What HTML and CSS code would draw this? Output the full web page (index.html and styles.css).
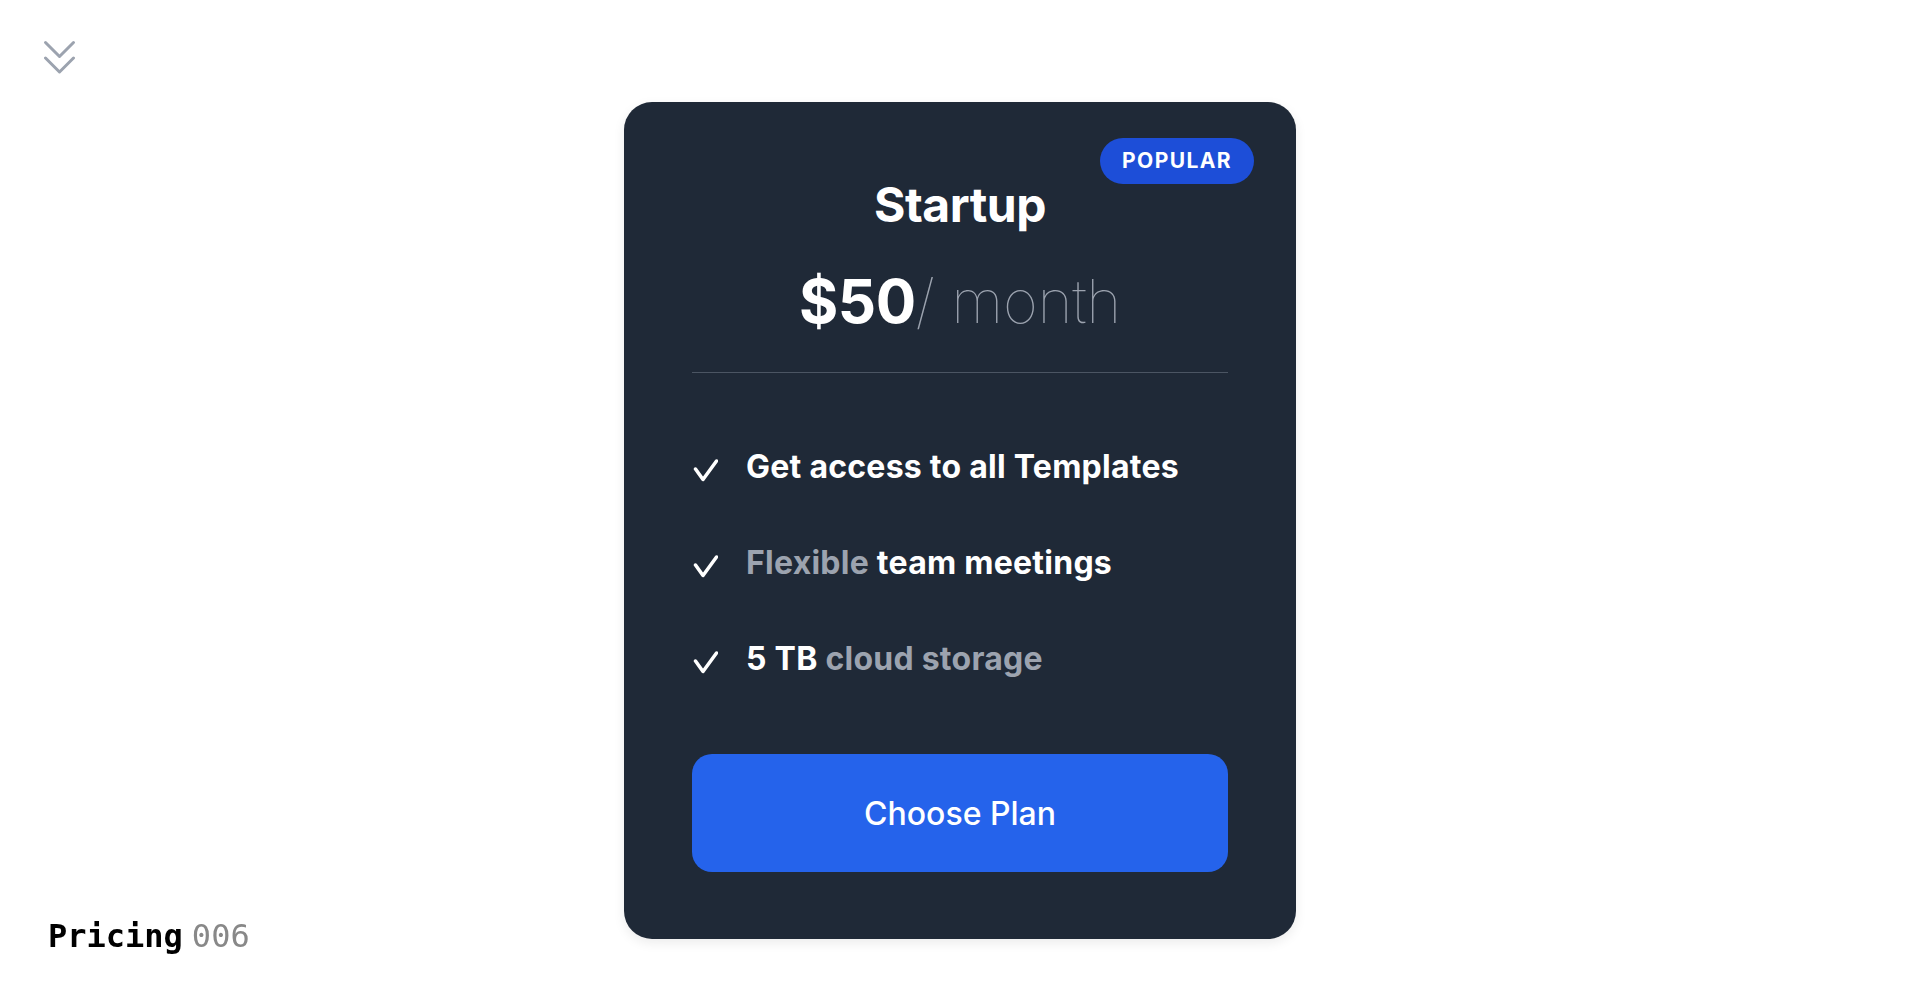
FILE: index.html
```html
<!DOCTYPE html>
<html lang="en">
<head>
<meta charset="utf-8">
<title>Pricing 006</title>
<link rel="stylesheet" href="styles.css">
</head>
<body>
<div class="page">
  <div class="topbar">
    <svg class="toggle-icon" width="33" height="34" viewBox="0 0 33 34" fill="none" stroke="#9ca3af" stroke-width="3" stroke-linecap="round" stroke-linejoin="round" aria-hidden="true">
      <polyline points="2.5,2.5 16.5,16.5 30.5,2.5"/>
      <polyline points="2.5,18 16.5,32 30.5,18"/>
    </svg>
  </div>
  <main class="stage">
    <section class="card">
      <span class="badge">POPULAR</span>
      <h2 class="plan-name">Startup</h2>
      <p class="price"><span class="amount">$50</span><span class="period">/ month</span></p>
      <hr class="divider">
      <ul class="features">
        <li class="feature">
          <svg class="check" width="26" height="26" viewBox="0 0 26 26" fill="none" stroke="#ffffff" stroke-width="3.5" stroke-linecap="round" stroke-linejoin="round" aria-hidden="true"><polyline points="3.5,12 11,22.5 24.5,4"/></svg>
          <span class="feature-text">Get access to all Templates</span>
        </li>
        <li class="feature">
          <svg class="check" width="26" height="26" viewBox="0 0 26 26" fill="none" stroke="#ffffff" stroke-width="3.5" stroke-linecap="round" stroke-linejoin="round" aria-hidden="true"><polyline points="3.5,12 11,22.5 24.5,4"/></svg>
          <span class="feature-text"><span class="muted">Flexible</span> team meetings</span>
        </li>
        <li class="feature">
          <svg class="check" width="26" height="26" viewBox="0 0 26 26" fill="none" stroke="#ffffff" stroke-width="3.5" stroke-linecap="round" stroke-linejoin="round" aria-hidden="true"><polyline points="3.5,12 11,22.5 24.5,4"/></svg>
          <span class="feature-text">5 TB <span class="muted">cloud storage</span></span>
        </li>
      </ul>
      <button class="choose-btn" type="button">Choose Plan</button>
    </section>
  </main>
  <div class="page-label"><span class="label-name">Pricing</span><span class="label-num">006</span></div>
</div>
</body>
</html>
```

FILE: styles.css
```css
* {
  box-sizing: border-box;
}

html, body {
  margin: 0;
  padding: 0;
  background: #ffffff;
}

body {
  font-family: "Inter", "Liberation Sans", sans-serif;
  color: #111827;
}

.page {
  min-height: 1000px;
  display: flex;
  flex-direction: column;
}

.topbar {
  padding: 40px 0 0 43px;
  height: 74px;
  display: flex;
  align-items: flex-start;
}

.toggle-icon {
  display: block;
}

.stage {
  display: flex;
  justify-content: center;
  padding-top: 28px;
}

.card {
  position: relative;
  width: 672px;
  height: 837px;
  background: #1f2937;
  border-radius: 28px;
  padding: 67px 68px 67px;
  display: flex;
  flex-direction: column;
  box-shadow: 0 4px 12px rgba(0, 0, 0, 0.08);
}

.badge {
  position: absolute;
  top: 36px;
  right: 42px;
  height: 46px;
  padding: 0 22px;
  border-radius: 23px;
  background: #1d4ed8;
  color: #ffffff;
  font-size: 21px;
  font-weight: 700;
  letter-spacing: 1.4px;
  line-height: 46px;
}

.plan-name {
  margin: 12px 0 0;
  text-align: center;
  color: #ffffff;
  font-size: 48px;
  line-height: 48px;
  font-weight: 700;
  letter-spacing: -0.5px;
}

.price {
  margin: 42px 0 0;
  text-align: center;
  font-size: 60px;
  line-height: 60px;
  white-space: nowrap;
}

.amount {
  color: #ffffff;
  font-weight: 700;
  letter-spacing: -0.5px;
}

.period {
  color: #9ca3af;
  font-weight: 100;
  letter-spacing: -0.3px;
}

.divider {
  margin: 41px 0 0;
  border: 0;
  height: 1px;
  background: #4b5563;
}

.features {
  list-style: none;
  margin: 76px 0 0;
  padding: 0;
  display: flex;
  flex-direction: column;
  gap: 60px;
}

.feature {
  display: flex;
  align-items: flex-start;
  gap: 28px;
  height: 36px;
}

.check {
  display: block;
  flex: none;
  margin-top: 8px;
}

.feature-text {
  color: #ffffff;
  font-size: 32px;
  line-height: 36px;
  font-weight: 700;
  letter-spacing: 0.25px;
  white-space: nowrap;
}

.muted {
  color: #9ca3af;
}

.choose-btn {
  margin-top: auto;
  height: 118px;
  width: 100%;
  border: 0;
  border-radius: 20px;
  background: #2563eb;
  color: #ffffff;
  font-family: "Inter", "Liberation Sans", sans-serif;
  font-size: 32px;
  font-weight: 500;
  cursor: pointer;
}

.page-label {
  position: fixed;
  left: 48px;
  bottom: 48px;
  font-family: "DejaVu Sans Mono", "Liberation Mono", monospace;
  font-size: 32px;
  line-height: 32px;
  white-space: nowrap;
}

.label-name {
  color: #000000;
  font-weight: 700;
}

.label-num {
  margin-left: 9px;
  color: #888888;
  font-weight: 400;
}
```
